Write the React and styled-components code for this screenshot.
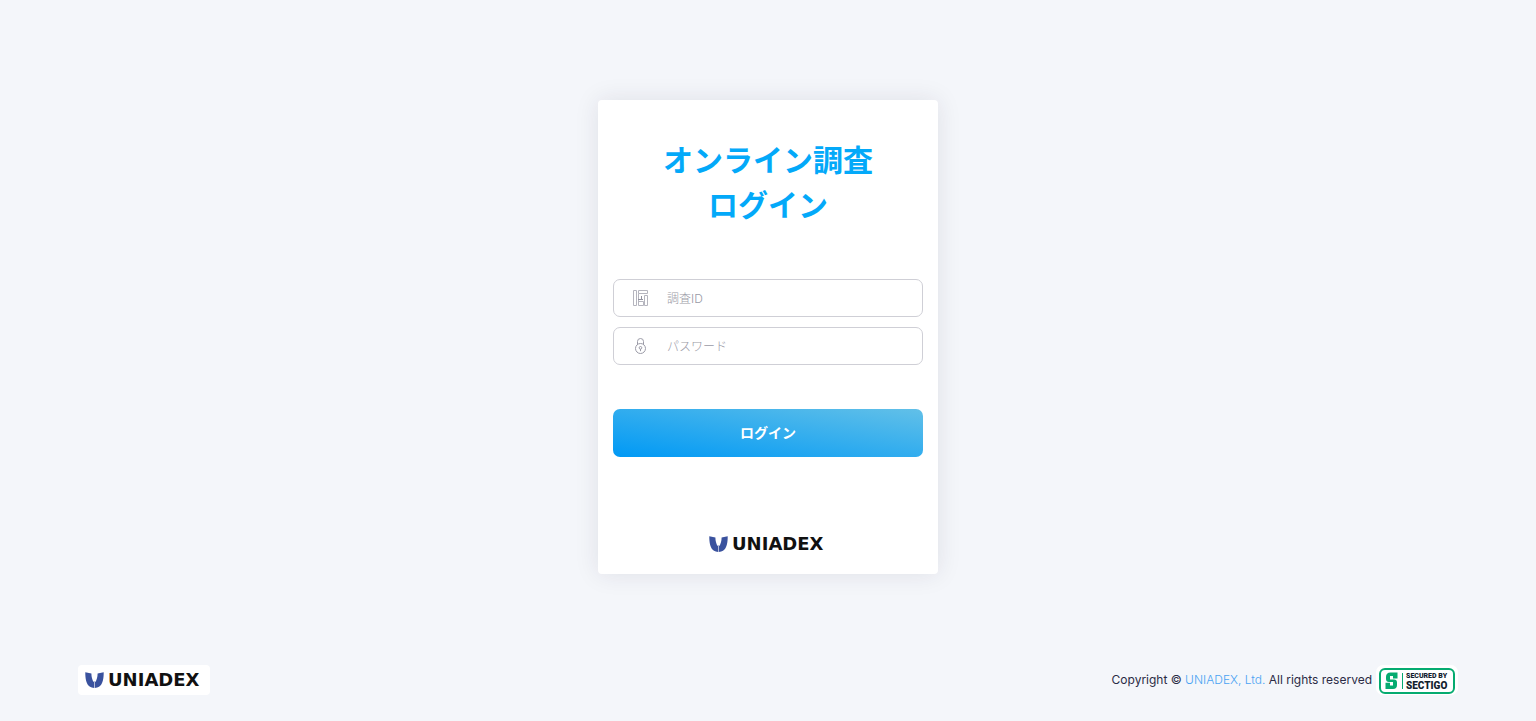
import React from "react";
import styled, { createGlobalStyle } from "styled-components";

const GlobalStyle = createGlobalStyle`
  *, *::before, *::after { box-sizing: border-box; }
  body {
    margin: 0;
    background: #f4f6fa;
    color: #2b2b45;
    font-family: Inter, "Noto Sans CJK JP", sans-serif;
  }
`;

const Page = styled.div`
  min-height: 100vh;
  display: flex;
  flex-direction: column;
  justify-content: space-between;
  gap: 24px;
  padding: 100px 78px 26px;
`;

const Card = styled.main`
  width: 100%;
  max-width: 340px;
  margin: 0 auto;
  padding: 36px 15px 15px;
  display: flex;
  flex-direction: column;
  align-items: center;
  background: #fff;
  border-radius: 4px;
  box-shadow: 0 0 24px rgba(35, 30, 60, 0.1);
`;

const Title = styled.h1`
  margin: 0;
  color: #03a9f9;
  font-family: "Noto Sans CJK JP", sans-serif;
  font-size: 30px;
  line-height: 45px;
  font-weight: 700;
  text-align: center;
`;

const Form = styled.form`
  width: 100%;
  margin-top: 53px;
  display: flex;
  flex-direction: column;
  gap: 10px;
`;

const Field = styled.label`
  height: 38px;
  display: flex;
  align-items: center;
  gap: 17px;
  padding: 0 18px;
  border: 1px solid #cfcfd6;
  border-radius: 7px;
  background: #fff;

  svg { flex: none; }
`;

const TextInput = styled.input`
  flex: 1;
  min-width: 0;
  height: 34px;
  padding: 0;
  border: 0;
  outline: 0;
  background: transparent;
  color: #2b2b45;
  font: 300 12px/18px Inter, "Noto Sans CJK JP", sans-serif;

  &::placeholder { color: #9a9aa6; opacity: 1; }
`;

const SubmitButton = styled.button`
  height: 48px;
  margin-top: 34px;
  padding: 0 0 2px;
  border: 0;
  border-radius: 7px;
  background: linear-gradient(to top right, #0099f5, #62c0e8);
  color: #fff;
  font: 700 14px/20px "Noto Sans CJK JP", sans-serif;
  cursor: pointer;
`;

const CardLogo = styled.div`
  display: flex;
  margin-top: 72px;
`;

const Footer = styled.footer`
  display: flex;
  flex-wrap: wrap;
  align-items: center;
  justify-content: space-between;
  gap: 12px;
`;

const LogoPlate = styled.div`
  display: flex;
  padding: 0 7px;
  height: 30px;
  background: #fff;
  border-radius: 4px;
`;

const Legal = styled.div`
  display: flex;
  align-items: center;
  gap: 4px;
`;

const Copyright = styled.p`
  margin: 0;
  font-size: 12px;
  line-height: 18px;
`;

const CompanyLink = styled.a`
  color: #4ba3f3;
  font-weight: 300;
  text-decoration: none;
`;

function UniadexLogo() {
  return (
    <svg width="118" height="30" viewBox="0 0 118 30" role="img" aria-label="UNIADEX">
      <path
        d="M.3 7.2 L6.4 8.6 C6.4 12 7.2 14.6 8.4 17 L9.2 16 V23 Q6.5 22.8 5 21.7 C1.2 19.5 .2 13.5 .3 7.2Z M18.7 7.2 L12.6 8.6 C12.6 12 11.8 14.6 10.6 17 L9.8 16 V23 Q12.5 22.8 14 21.7 C17.8 19.5 18.8 13.5 18.7 7.2Z"
        fill="#3a529e"
      />
      <text x="23" y="21" fill="#111" fontFamily="DejaVu Sans, sans-serif" fontSize="18" fontWeight="700">
        UNIADEX
      </text>
    </svg>
  );
}

function BuildingIcon() {
  return (
    <svg width="18" height="18" viewBox="0 0 18 18" fill="none" stroke="#b5b5be" aria-hidden="true">
      <path d="M1.5 1.5h3v15h-3zM6.5 1.5h9v3h-9zM6.5 4.5v12h5v-4h-5M12.5 6.5h3v10h-3z" />
      <path d="M6 10.5h5M9.5 7v3.5" stroke="#92929f" />
    </svg>
  );
}

function LockIcon() {
  return (
    <svg width="18" height="18" viewBox="0 0 18 18" fill="none" stroke="#9b9ba7" aria-hidden="true">
      <circle cx="8.5" cy="11.5" r="5" />
      <path d="M5.5 7.4V4.5a3 3 0 0 1 6 0v2.9" />
      <path d="M8.5 12v2.2" />
      <circle cx="8.5" cy="10.8" r="1.3" />
    </svg>
  );
}

function SectigoSeal() {
  return (
    <svg width="82" height="30" viewBox="0 0 82 30" role="img" aria-label="Secured by Sectigo">
      <rect width="82" height="30" rx="7" fill="#fff" />
      <rect x="4" y="4" width="74" height="24" rx="5" fill="#fff" stroke="#05ab70" strokeWidth="2" />
      <path
        d="M21.5 7.5H14.5Q10 7.5 10 12V14Q10 17 13 17H17V20.5H14V17.8H9.5V24H17Q21 24 21 20V17.5Q21 14.5 18 14.5H14V11H17V13.5H21.5Z"
        fill="#05ab70"
      />
      <path d="M26.5 8v16" stroke="#05ab70" />
      <g fill="#12212e" fontFamily="Roboto, sans-serif" fontWeight="900">
        <text x="30" y="13" fontSize="7">SECURED BY</text>
        <text x="30" y="24" fontSize="10">SECTIGO</text>
      </g>
    </svg>
  );
}

export default function App() {
  return (
    <>
      <GlobalStyle />
      <Page lang="ja">
        <Card>
          <Title>
            オンライン調査
            <br />
            ログイン
          </Title>
          <Form onSubmit={(event) => event.preventDefault()}>
            <Field>
              <BuildingIcon />
              <TextInput type="text" name="surveyId" placeholder="調査ID" aria-label="調査ID" />
            </Field>
            <Field>
              <LockIcon />
              <TextInput type="password" name="password" placeholder="パスワード" aria-label="パスワード" />
            </Field>
            <SubmitButton type="submit">ログイン</SubmitButton>
          </Form>
          <CardLogo>
            <UniadexLogo />
          </CardLogo>
        </Card>
        <Footer>
          <LogoPlate>
            <UniadexLogo />
          </LogoPlate>
          <Legal>
            <Copyright>
              Copyright © <CompanyLink href="#">UNIADEX, Ltd.</CompanyLink> All rights reserved
            </Copyright>
            <SectigoSeal />
          </Legal>
        </Footer>
      </Page>
    </>
  );
}
